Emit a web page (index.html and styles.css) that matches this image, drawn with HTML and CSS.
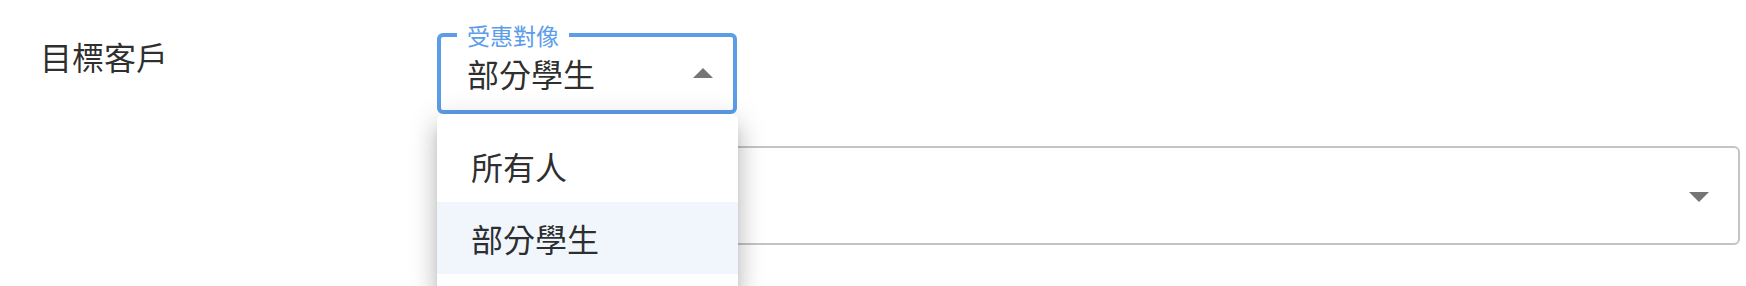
FILE: index.html
```html
<!DOCTYPE html>
<html lang="zh-Hant">
<head>
<meta charset="utf-8">
<title>目標客戶</title>
<link rel="stylesheet" href="styles.css">
</head>
<body>
<main class="form">
  <div class="field-label">目標客戶</div>
  <div class="select-wrap">
    <fieldset class="select select--focused">
      <legend class="select-legend">受惠對像</legend>
      <div class="select-value">部分學生</div>
      <span class="arrow arrow--up"></span>
    </fieldset>
    <ul class="menu">
      <li class="menu-item">所有人</li>
      <li class="menu-item menu-item--selected">部分學生</li>
    </ul>
  </div>
  <div class="field-label field-label--empty"></div>
  <div class="select select--plain">
    <div class="select-value"></div>
    <span class="arrow arrow--down arrow--plain"></span>
  </div>
</main>
</body>
</html>
```
FILE: styles.css
```css
html, body {
  margin: 0;
  padding: 0;
  background: #ffffff;
  overflow: hidden;
  height: 100%;
}

body {
  font-family: "Noto Sans CJK TC", "Noto Sans", sans-serif;
  color: rgba(0, 0, 0, 0.84);
}

.form {
  display: grid;
  grid-template-columns: 397px 1fr;
  row-gap: 32px;
  padding: 21px 6px 0 40px;
  align-items: start;
}

.field-label {
  font-size: 32px;
  line-height: 40px;
  margin-top: 15px;
}

.select-wrap {
  position: relative;
  width: 300px;
}

.select {
  box-sizing: border-box;
  margin: 0;
  display: flex;
  align-items: center;
  justify-content: space-between;
  min-width: 0;
}

.select--focused {
  border: 4px solid #5b9de9;
  border-radius: 6px;
  padding: 4px 20px 17px 16px;
}

.select-legend {
  font-size: 23px;
  line-height: 28px;
  color: #5b9de9;
  padding: 0 10px;
}

.select-value {
  font-size: 32px;
  line-height: 40px;
  padding-left: 10px;
  min-height: 40px;
}

.select--plain {
  border: 2px solid #c4c4c4;
  border-radius: 6px;
  height: 99px;
  padding: 0 29px 0 24px;
}

.arrow {
  width: 0;
  height: 0;
  border-left: 10px solid transparent;
  border-right: 10px solid transparent;
}

.arrow--up {
  border-bottom: 10px solid #757575;
}

.arrow--down {
  border-top: 10px solid #757575;
  margin-top: 2px;
}

.menu {
  position: absolute;
  top: 100%;
  left: 0;
  width: 301px;
  margin: 0;
  padding: 16px 0 16px;
  list-style: none;
  background: #ffffff;
  border-radius: 6px;
  box-shadow:
    0 10px 10px -6px rgba(0, 0, 0, 0.2),
    0 16px 20px 2px rgba(0, 0, 0, 0.14),
    0 6px 28px 4px rgba(0, 0, 0, 0.12);
  z-index: 10;
}

.menu-item {
  font-size: 32px;
  line-height: 40px;
  padding: 16px 34px;
}

.menu-item--selected {
  background: #f1f6fd;
}
```
